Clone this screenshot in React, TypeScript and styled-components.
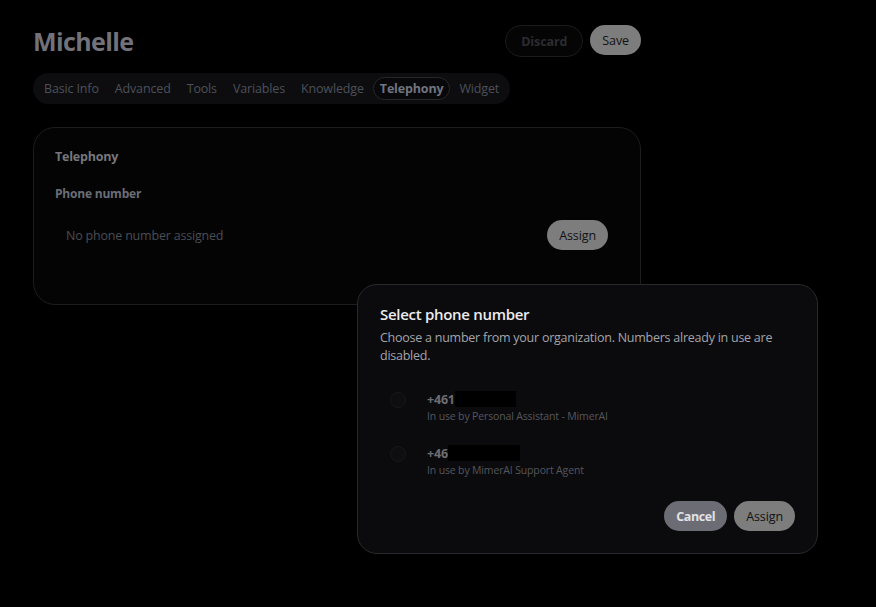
import React, { useState } from 'react'
import styled, { createGlobalStyle } from 'styled-components'

const GlobalStyle = createGlobalStyle`
	html, body {
		margin: 0;
		padding: 0;
		background: #000;
		font-family: 'Open Sans', 'Noto Sans', sans-serif;
	}
	* {
		box-sizing: border-box;
	}
`

const Page = styled.div`
	position: relative;
	width: 876px;
	height: 607px;
	background: #000;
	padding: 25px 0 0 33px;
	overflow: hidden;
`

const Column = styled.div`
	width: 608px;
	display: flex;
	flex-direction: column;
`

const Header = styled.div`
	display: flex;
	align-items: center;
	justify-content: space-between;
	height: 32px;
`

const Title = styled.h1`
	margin: 0;
	font-size: 25px;
	font-weight: 700;
	letter-spacing: -0.6px;
	color: #72737a;
`

const Actions = styled.div`
	display: flex;
	gap: 7px;
`

const PillButton = styled.button<{ variant: 'ghost' | 'solid' | 'muted' }>`
	height: ${({ variant }) => (variant === 'ghost' ? '32px' : '30px')};
	padding: 0 ${({ variant }) => (variant === 'ghost' ? '15px' : '11px')};
	border-radius: 999px;
	font-family: inherit;
	font-size: 12.5px;
	font-weight: ${({ variant }) => (variant === 'solid' ? 500 : 700)};
	letter-spacing: ${({ variant }) => (variant === 'muted' ? '-0.4px' : '-0.1px')};
	cursor: pointer;
	border: 1px solid ${({ variant }) => (variant === 'ghost' ? '#1b1b1d' : 'transparent')};
	background: ${({ variant }) => (variant === 'ghost' ? '#050505' : variant === 'muted' ? '#6c6c74' : '#7d7d7d')};
	color: ${({ variant }) => (variant === 'ghost' ? '#2c2c30' : variant === 'muted' ? '#e2e2e6' : '#121212')};
`

const Tabs = styled.div`
	margin-top: 16px;
	align-self: flex-start;
	display: flex;
	align-items: center;
	gap: 2px;
	height: 31px;
	padding: 0 4px;
	border-radius: 999px;
	background: #0d0d0f;
`

const Tab = styled.div<{ active?: boolean }>`
	padding: 2px 6px;
	border-radius: 999px;
	font-size: 12.5px;
	font-weight: ${({ active }) => (active ? 700 : 500)};
	color: ${({ active }) => (active ? '#6f7480' : '#4c505a')};
	border: 1px solid ${({ active }) => (active ? '#26272b' : 'transparent')};
	background: ${({ active }) => (active ? '#08080a' : 'transparent')};
	letter-spacing: -0.15px;
`

const Card = styled.div`
	margin-top: 23px;
	height: 178px;
	border: 1px solid #1d1d20;
	border-radius: 22px;
	background: #040404;
	padding: 20px 32px 0 21px;
`

const CardTitle = styled.div`
	font-size: 12.5px;
	font-weight: 700;
	color: #76777c;
	letter-spacing: -0.2px;
`

const FieldLabel = styled.div`
	margin-top: 20px;
	font-size: 12px;
	font-weight: 700;
	color: #6a6e78;
	letter-spacing: -0.2px;
`

const FieldRow = styled.div`
	margin-top: 18px;
	display: flex;
	align-items: center;
	justify-content: space-between;
	padding-left: 11px;
`

const Muted = styled.span`
	font-size: 12.5px;
	color: #4a4d55;
	letter-spacing: -0.2px;
`

const Dialog = styled.div`
	position: absolute;
	left: 357px;
	top: 284px;
	width: 461px;
	height: 270px;
	background: #0b0b0d;
	border: 1px solid #2a2a2e;
	border-radius: 20px;
	padding: 19px 22px 0 22px;
	display: flex;
	flex-direction: column;
`

const DialogTitle = styled.h2`
	margin: 0;
	font-size: 15px;
	font-weight: 600;
	color: #ececee;
	letter-spacing: -0.3px;
`

const DialogText = styled.p`
	margin: 5px 0 0;
	font-size: 12.5px;
	line-height: 18px;
	color: #a4a4aa;
	letter-spacing: -0.25px;
`

const OptionList = styled.div`
	margin-top: 25px;
	display: flex;
	flex-direction: column;
	gap: 20px;
`

const Option = styled.label`
	display: flex;
	align-items: flex-start;
	gap: 21px;
	padding-left: 10px;
	cursor: not-allowed;
`

const Radio = styled.span`
	margin-top: 2px;
	width: 16px;
	height: 16px;
	border-radius: 50%;
	border: 1px solid #18181b;
	background: #0e0e10;
	flex-shrink: 0;
`

const OptionText = styled.div`
	display: flex;
	flex-direction: column;
`

const Number = styled.div`
	display: flex;
	align-items: center;
	font-size: 12.5px;
	font-weight: 700;
	color: #6c6c72;
	height: 18px;
	letter-spacing: -0.2px;
`

const Redaction = styled.span<{ width: number }>`
	display: inline-block;
	width: ${({ width }) => width}px;
	height: 16px;
	background: #000;
`

const OptionHint = styled.div`
	font-size: 10.5px;
	line-height: 16px;
	color: #55565c;
	letter-spacing: -0.15px;
`

const DialogFooter = styled.div`
	margin-top: auto;
	margin-bottom: 22px;
	display: flex;
	justify-content: flex-end;
	gap: 7px;
`

const numbers = [
	{ prefix: '+461', hidden: 61, hint: 'In use by Personal Assistant - MimerAI' },
	{ prefix: '+46', hidden: 72, hint: 'In use by MimerAI Support Agent' },
]

const tabs = ['Basic Info', 'Advanced', 'Tools', 'Variables', 'Knowledge', 'Telephony', 'Widget']

export default function App() {
	const [active] = useState('Telephony')
	return (
		<Page>
			<GlobalStyle />
			<Column>
				<Header>
					<Title>Michelle</Title>
					<Actions>
						<PillButton variant="ghost">Discard</PillButton>
						<PillButton variant="solid">Save</PillButton>
					</Actions>
				</Header>
				<Tabs>
					{tabs.map((t) => (
						<Tab key={t} active={t === active}>
							{t}
						</Tab>
					))}
				</Tabs>
				<Card>
					<CardTitle>Telephony</CardTitle>
					<FieldLabel>Phone number</FieldLabel>
					<FieldRow>
						<Muted>No phone number assigned</Muted>
						<PillButton variant="solid">Assign</PillButton>
					</FieldRow>
				</Card>
			</Column>
			<Dialog>
				<DialogTitle>Select phone number</DialogTitle>
				<DialogText>Choose a number from your organization. Numbers already in use are disabled.</DialogText>
				<OptionList>
					{numbers.map((n) => (
						<Option key={n.hint}>
							<Radio />
							<OptionText>
								<Number>
									{n.prefix}
									<Redaction width={n.hidden} />
								</Number>
								<OptionHint>{n.hint}</OptionHint>
							</OptionText>
						</Option>
					))}
				</OptionList>
				<DialogFooter>
					<PillButton variant="muted">Cancel</PillButton>
					<PillButton variant="solid">Assign</PillButton>
				</DialogFooter>
			</Dialog>
		</Page>
	)
}
